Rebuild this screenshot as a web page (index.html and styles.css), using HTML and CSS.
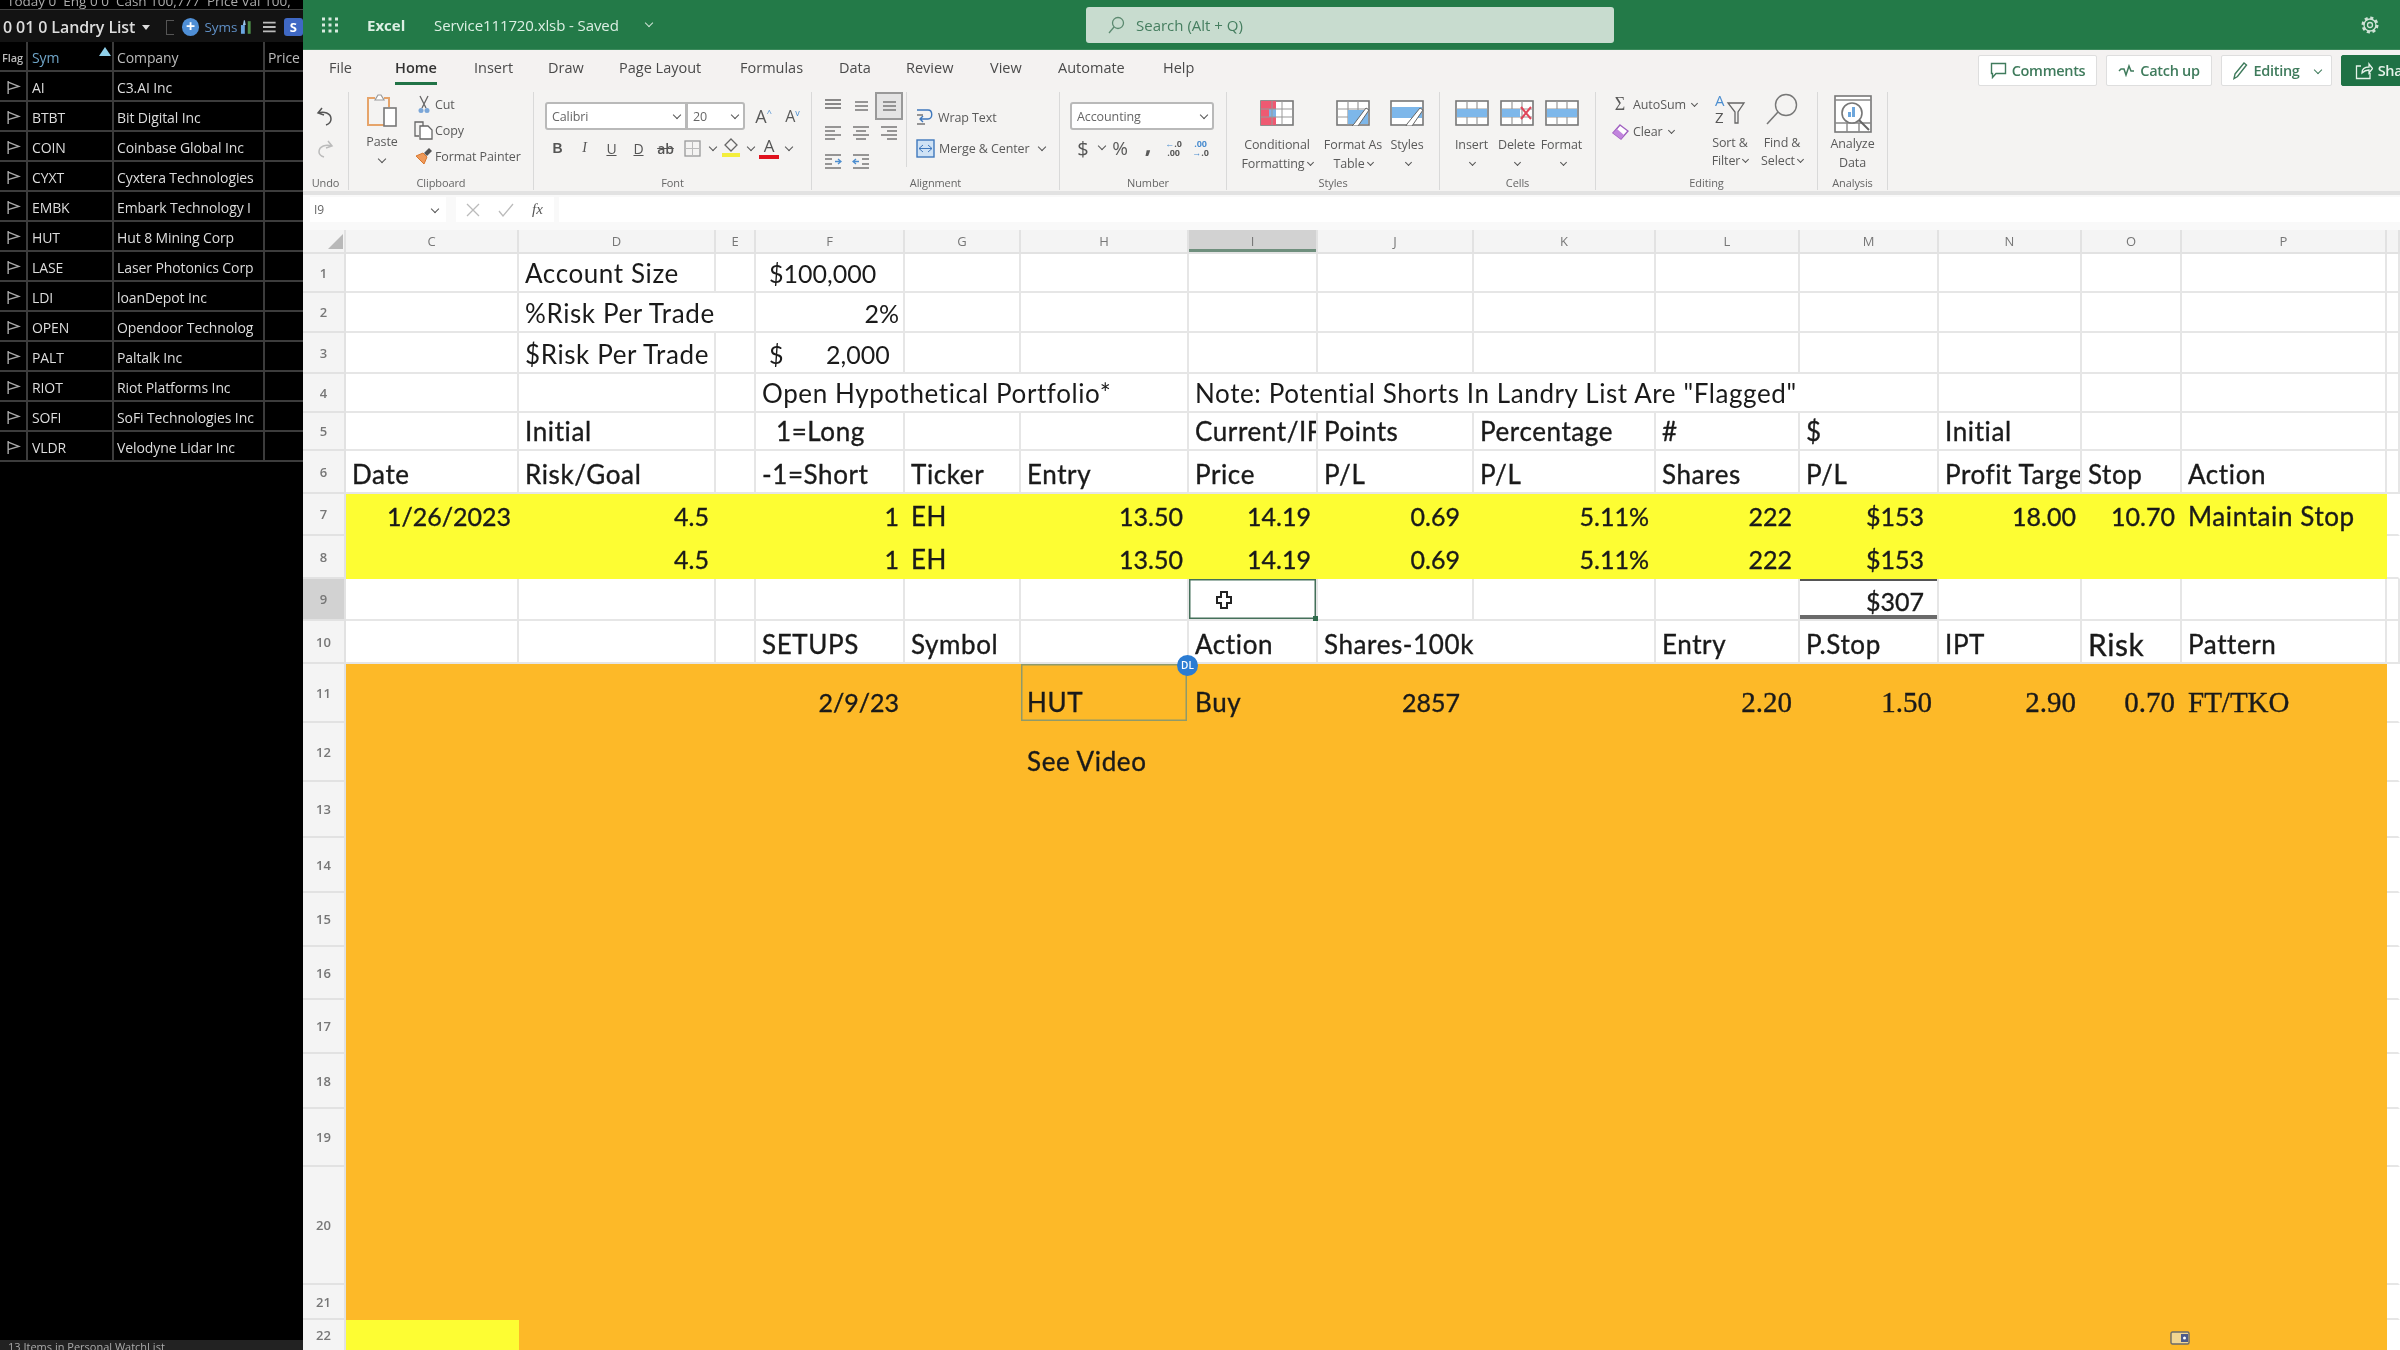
FILE: index.html
```html
<!DOCTYPE html>
<html lang="en">
<head>
<meta charset="utf-8">
<title>Excel - Service111720.xlsb</title>
<link rel="stylesheet" href="styles.css">
</head>
<body>
<svg class="sprite" width="0" height="0">
  <symbol id="flag" viewBox="0 0 14 14"><path d="M2 1v12M2 2l10 4-10 3" fill="none" stroke="#aaa" stroke-width="1.3"/></symbol>
  <symbol id="al-top" viewBox="0 0 18 18"><path d="M1 3h16M1 7h16M1 11h16" stroke="#666" stroke-width="1.6"/></symbol>
  <symbol id="al-mid" viewBox="0 0 18 18"><path d="M3 5h13M3 9h13M3 13h13" stroke="#777" stroke-width="1.6"/></symbol>
  <symbol id="al-left" viewBox="0 0 18 18"><path d="M1 2h16M1 6h10M1 10h16M1 14h10" stroke="#777" stroke-width="1.6"/></symbol>
  <symbol id="al-center" viewBox="0 0 18 18"><path d="M1 2h16M4 6h10M1 10h16M4 14h10" stroke="#777" stroke-width="1.6"/></symbol>
  <symbol id="al-right" viewBox="0 0 18 18"><path d="M1 2h16M7 6h10M1 10h16M7 14h10" stroke="#777" stroke-width="1.6"/></symbol>
  <symbol id="grid" viewBox="0 0 34 26"><rect x="1" y="1" width="32" height="24" fill="#fff" stroke="#777" stroke-width="1.6"/><path d="M12 1v24M22 1v24M1 9h32M1 17h32" stroke="#999" stroke-width="1.2"/></symbol>
</svg>

<div class="app">
  <aside class="watch">
    <div class="watch-stats">Today 0 &nbsp;Eng 0 0 &nbsp;Cash 100,777 &nbsp;Price Val 100,</div>
    <div class="watch-bar">
      <span class="watch-title">0 01 0 Landry List</span>
      <span class="watch-caret"></span>
      <span class="watch-box"></span>
      <span class="watch-plus">+</span>
      <span class="watch-syms">Syms</span>
      <svg class="watch-bars" width="15" height="16" viewBox="0 0 15 16"><path d="M2 15V6h4v9z" fill="#6aa6e0"/><path d="M4 6l1-5h1l1 5z" fill="#9cc7ea"/><path d="M9 15V2h3v13z" fill="#4e8f4a"/></svg>
      <svg class="watch-menu" width="13" height="12" viewBox="0 0 13 12"><path d="M0 1.5h13M0 6h13M0 10.500h13" stroke="#bbb" stroke-width="2"/></svg>
      <span class="watch-s">S</span>
    </div>
    <div class="watch-table">
      <div class="wrow whead"><span class="wflag">Flag</span><span class="wsym wsorted">Sym</span><span class="wco">Company</span><span class="wpr">Price</span></div>
      <div class="wrow"><span class="wflag"><svg class="fi"><use href="#flag"/></svg></span><span class="wsym">AI</span><span class="wco">C3.AI Inc</span><span class="wpr"></span></div>
      <div class="wrow"><span class="wflag"><svg class="fi"><use href="#flag"/></svg></span><span class="wsym">BTBT</span><span class="wco">Bit Digital Inc</span><span class="wpr"></span></div>
      <div class="wrow"><span class="wflag"><svg class="fi"><use href="#flag"/></svg></span><span class="wsym">COIN</span><span class="wco">Coinbase Global Inc</span><span class="wpr"></span></div>
      <div class="wrow"><span class="wflag"><svg class="fi"><use href="#flag"/></svg></span><span class="wsym">CYXT</span><span class="wco">Cyxtera Technologies</span><span class="wpr"></span></div>
      <div class="wrow"><span class="wflag"><svg class="fi"><use href="#flag"/></svg></span><span class="wsym">EMBK</span><span class="wco">Embark Technology I</span><span class="wpr"></span></div>
      <div class="wrow"><span class="wflag"><svg class="fi"><use href="#flag"/></svg></span><span class="wsym">HUT</span><span class="wco">Hut 8 Mining Corp</span><span class="wpr"></span></div>
      <div class="wrow"><span class="wflag"><svg class="fi"><use href="#flag"/></svg></span><span class="wsym">LASE</span><span class="wco">Laser Photonics Corp</span><span class="wpr"></span></div>
      <div class="wrow"><span class="wflag"><svg class="fi"><use href="#flag"/></svg></span><span class="wsym">LDI</span><span class="wco">loanDepot Inc</span><span class="wpr"></span></div>
      <div class="wrow"><span class="wflag"><svg class="fi"><use href="#flag"/></svg></span><span class="wsym">OPEN</span><span class="wco">Opendoor Technolog</span><span class="wpr"></span></div>
      <div class="wrow"><span class="wflag"><svg class="fi"><use href="#flag"/></svg></span><span class="wsym">PALT</span><span class="wco">Paltalk Inc</span><span class="wpr"></span></div>
      <div class="wrow"><span class="wflag"><svg class="fi"><use href="#flag"/></svg></span><span class="wsym">RIOT</span><span class="wco">Riot Platforms Inc</span><span class="wpr"></span></div>
      <div class="wrow"><span class="wflag"><svg class="fi"><use href="#flag"/></svg></span><span class="wsym">SOFI</span><span class="wco">SoFi Technologies Inc</span><span class="wpr"></span></div>
      <div class="wrow"><span class="wflag"><svg class="fi"><use href="#flag"/></svg></span><span class="wsym">VLDR</span><span class="wco">Velodyne Lidar Inc</span><span class="wpr"></span></div>
    </div>
    <div class="watch-status">13 Items in Personal WatchList</div>
  </aside>

  <main class="excel">
    <header class="titlebar">
      <svg class="waffle" width="18" height="16" viewBox="0 0 18 16"><path d="M1 2h3M7.500 2h3M14 2h3M1 8h3M7.500 8h3M14 8h3M1 14h3M7.500 14h3M14 14h3" stroke="#d8eadf" stroke-width="3"/></svg>
      <span class="app-name">Excel</span>
      <span class="file-name">Service111720.xlsb - Saved</span>
      <span class="chev chev-light"></span>
      <div class="search">
        <svg width="18" height="18" viewBox="0 0 18 18"><circle cx="11" cy="7" r="5.500" fill="none" stroke="#5c8a70" stroke-width="1.3"/><path d="M7 11l-5 6" stroke="#5c8a70" stroke-width="1.300"/></svg>
        <span>Search (Alt + Q)</span>
      </div>
      <svg class="gear" width="20" height="20" viewBox="0 0 20 20"><circle cx="10" cy="10" r="7" fill="none" stroke="#cfe3d6" stroke-width="3" stroke-dasharray="3 2.500"/><circle cx="10" cy="10" r="6" fill="none" stroke="#cfe3d6" stroke-width="1.300"/><circle cx="10" cy="10" r="2.500" fill="none" stroke="#cfe3d6" stroke-width="1.300"/></svg>
    </header>

    <div class="tabbar">
      <nav class="tabs">
        <span>File</span><span class="tab-on">Home</span><span>Insert</span><span>Draw</span><span>Page Layout</span><span>Formulas</span><span>Data</span><span>Review</span><span>View</span><span>Automate</span><span>Help</span>
      </nav>
      <div class="actions">
        <button class="act act-comments"><svg width="17" height="17" viewBox="0 0 17 17"><path d="M1.500 1.500h14v10H6l-3.500 4v-4h-1z" fill="none" stroke="#3f7b5c" stroke-width="1.400"/></svg>Comments</button>
        <button class="act act-catch"><svg width="17" height="13" viewBox="0 0 17 13"><path d="M1 7l2-2 3 0 2 6 3-9 2 5h3" fill="none" stroke="#3f7b5c" stroke-width="1.500"/></svg>Catch up</button>
        <button class="act act-edit"><svg width="16" height="19" viewBox="0 0 16 19"><path d="M3 13L12 2l2.500 2L5.500 15.500 2 17.500z" fill="none" stroke="#3f7b5c" stroke-width="1.400"/></svg>Editing<span class="chev chev-green"></span></button>
        <button class="act act-share"><svg width="18" height="18" viewBox="0 0 18 18"><path d="M6 4H1.500v12.500H15V11M7 11c0-4 3-6 7-6V2l3.500 4.500L14 11V8c-3 0-5 1-7 3z" fill="none" stroke="#e6f2ea" stroke-width="1.300"/></svg>Share</button>
      </div>
    </div>

    <section class="ribbon">
      <div class="group g-undo">
        <div class="gbody undo-body">
          <svg width="18" height="19" viewBox="0 0 18 19"><path d="M6 1L2 6l6 2M2 6c6-2 13 0 13 6 0 3-2 5-5 6" fill="none" stroke="#555" stroke-width="1.500"/></svg>
          <svg width="18" height="18" viewBox="0 0 18 18"><path d="M12 1l4 5-6 2M16 6C10 4 3 6 3 12c0 3 2 4 5 5" fill="none" stroke="#bbb" stroke-width="1.500"/></svg>
        </div>
        <div class="glabel">Undo</div>
      </div>

      <div class="group g-clip">
        <div class="gbody">
          <div class="paste">
            <svg width="32" height="34" viewBox="0 0 32 34"><path d="M9 4H2v27h16" fill="none" stroke="#e6a46a" stroke-width="2"/><path d="M9 6l3-5h3l3 5z" fill="#fff" stroke="#999" stroke-width="1.200"/><path d="M18 4h5v9" fill="none" stroke="#e6a46a" stroke-width="2"/><rect x="18" y="14" width="12" height="18" fill="#fff" stroke="#777" stroke-width="1.600"/></svg>
            <span class="paste-t">Paste</span>
            <span class="chev"></span>
          </div>
          <div class="cliplist">
            <div class="clipi"><span class="clipic"><svg width="14" height="19" viewBox="0 0 14 19"><path d="M3 1l6 12M11 1L5 13" stroke="#666" stroke-width="1.300"/><circle cx="4" cy="15.500" r="2.500" fill="#7aa6d8"/><circle cx="10" cy="15.500" r="2.500" fill="#7aa6d8"/></svg></span>Cut</div>
            <div class="clipi"><span class="clipic"><svg width="20" height="19" viewBox="0 0 20 19"><path d="M5 15H1V1h8v4" fill="none" stroke="#666" stroke-width="1.300"/><path d="M6 5h8l4 4v9H6z" fill="#fff" stroke="#666" stroke-width="1.300"/></svg></span>Copy</div>
            <div class="clipi"><span class="clipic"><svg width="18" height="18" viewBox="0 0 18 18"><path d="M1 9l7-3 4 4-3 7z" fill="#ef9a5a" stroke="#d9772e"/><path d="M9 6l5-5 3 3-5 5z" fill="#555"/></svg></span>Format Painter</div>
          </div>
        </div>
        <div class="glabel">Clipboard</div>
      </div>

      <div class="group g-font">
        <div class="gbody gcol">
          <div class="font-row">
            <div class="select sel-font">Calibri<span class="chev"></span></div>
            <div class="select sel-size">20<span class="chev"></span></div>
            <span class="grow">A<sup>^</sup></span>
            <span class="grow shrink">A<sup>v</sup></span>
          </div>
          <div class="font-tools">
            <span class="ft ft-b">B</span>
            <span class="ft ft-i">I</span>
            <span class="ft ft-u">U</span>
            <span class="ft ft-d">D</span>
            <span class="ft ft-s">ab</span>
            <span class="ft"><svg width="17" height="17" viewBox="0 0 17 17"><rect x="1" y="1" width="15" height="15" fill="none" stroke="#999" stroke-width="1.300"/><path d="M8.500 1v15M1 8.500h15" stroke="#bbb"/></svg></span>
            <span class="fc"><span class="chev"></span></span>
            <span class="ft"><svg width="18" height="20" viewBox="0 0 18 20"><path d="M9 1l6 6-6 6-6-6z" fill="none" stroke="#666" stroke-width="1.300"/><rect x="0" y="15" width="18" height="4" fill="#f3ee3c"/></svg></span>
            <span class="fc"><span class="chev"></span></span>
            <span class="ft ft-a">A</span>
            <span class="fc"><span class="chev"></span></span>
          </div>
        </div>
        <div class="glabel">Font</div>
      </div>

      <div class="group g-align">
        <div class="gbody">
          <div class="align-grid">
            <svg class="ai"><use href="#al-top"/></svg>
            <svg class="ai"><use href="#al-mid"/></svg>
            <span class="ai-on"><svg class="ai"><use href="#al-mid"/></svg></span>
            <svg class="ai"><use href="#al-left"/></svg>
            <svg class="ai"><use href="#al-center"/></svg>
            <svg class="ai"><use href="#al-right"/></svg>
            <svg class="ai" viewBox="0 0 18 18"><path d="M1 2h16M1 15h16M1 6h7M1 11h7" stroke="#777" stroke-width="1.600"/><path d="M11 8.500h6M14 6l3 2.500-3 2.500" fill="none" stroke="#4c8ed0" stroke-width="1.300"/></svg>
            <svg class="ai" viewBox="0 0 18 18"><path d="M1 2h16M1 15h16M10 6h7M10 11h7" stroke="#777" stroke-width="1.600"/><path d="M1 8.500h6M4 6L1 8.500 4 11" fill="none" stroke="#4c8ed0" stroke-width="1.300"/></svg>
          </div>
          <div class="align-text">
            <div class="ati"><svg width="18" height="20" viewBox="0 0 18 20"><path d="M1 3h11M12 3c5 0 5 9 0 9H5M7 9l-3 3 3 3" fill="none" stroke="#3f78bd" stroke-width="1.400"/><path d="M1 8h6M1 17h8" stroke="#777" stroke-width="1.400"/></svg>Wrap Text</div>
            <div class="ati"><svg width="19" height="19" viewBox="0 0 19 19"><rect x="1" y="1" width="17" height="17" fill="#cfe2f5" stroke="#3f78bd" stroke-width="1.400"/><path d="M3 9.500h13M7 6l-4 3.500L7 13M12 6l4 3.500-4 3.500" fill="none" stroke="#3f78bd"/></svg>Merge &amp; Center<span class="chev"></span></div>
          </div>
        </div>
        <div class="glabel">Alignment</div>
      </div>

      <div class="group g-num">
        <div class="gbody gcol">
          <div class="select sel-num">Accounting<span class="chev"></span></div>
          <div class="num-tools">
            <span class="nt nt-big">$</span><span class="chev"></span><span class="nt nt-pct">%</span><span class="nt nt-comma">,</span>
            <span class="nt nt-dec"><b>←</b>.0<br>.00</span><span class="nt nt-dec"><i>.00</i><br><b>→</b>.0</span>
          </div>
        </div>
        <div class="glabel">Number</div>
      </div>

      <div class="group g-styles">
        <div class="gbody">
          <div class="bigb b-cf">
            <svg width="34" height="26" viewBox="0 0 34 26"><rect x="1" y="1" width="32" height="24" fill="#fff" stroke="#777" stroke-width="1.600"/><path d="M1 1h15v8H1zM1 17h15v8H1z" fill="#ee5a72"/><path d="M1 9h8v8H1z" fill="#ee5a72"/><path d="M9 9h7v8H9z" fill="#7fb2e5"/><path d="M12 1v24M22 1v24M1 9h32M1 17h32" stroke="#999"/></svg>
            <span class="bt">Conditional<br>Formatting<span class="chev"></span></span>
          </div>
          <div class="bigb b-fat">
            <svg width="34" height="26" viewBox="0 0 34 26"><use href="#grid"/><path d="M12 10h20v14H12z" fill="#7db7ea"/><path d="M18 24L30 8l3 2-11 16-6 0z" fill="#fff" stroke="#666"/></svg>
            <span class="bt">Format As<br>Table<span class="chev"></span></span>
          </div>
          <div class="bigb b-st">
            <svg width="34" height="26" viewBox="0 0 34 26"><rect x="1" y="1" width="32" height="24" fill="#fff" stroke="#777" stroke-width="1.600"/><path d="M2 7h30v11H2z" fill="#7db7ea"/><path d="M17 24L30 8l3 2-11 16-6 0z" fill="#fff" stroke="#666"/></svg>
            <span class="bt">Styles<br><span class="chev"></span></span>
          </div>
        </div>
        <div class="glabel">Styles</div>
      </div>

      <div class="group g-cells">
        <div class="gbody">
          <div class="bigb b-cell">
            <svg width="34" height="26" viewBox="0 0 34 26"><use href="#grid"/><path d="M2 9h30v8H2z" fill="#7db7ea"/></svg>
            <span class="bt">Insert<br><span class="chev"></span></span>
          </div>
          <div class="bigb b-cell">
            <svg width="34" height="26" viewBox="0 0 34 26"><use href="#grid"/><path d="M2 9h18v8H2z" fill="#7db7ea"/><path d="M21 7l10 12M31 7L21 19" stroke="#e0475b" stroke-width="2"/></svg>
            <span class="bt">Delete<br><span class="chev"></span></span>
          </div>
          <div class="bigb b-cell">
            <svg width="34" height="26" viewBox="0 0 34 26"><use href="#grid"/><path d="M2 9h30v8H2z" fill="#7db7ea"/></svg>
            <span class="bt">Format<br><span class="chev"></span></span>
          </div>
        </div>
        <div class="glabel">Cells</div>
      </div>

      <div class="group g-edit">
        <div class="gbody">
          <div class="editlist">
            <div class="edi"><span class="sigma">Σ</span>AutoSum<span class="chev"></span></div>
            <div class="edi"><svg width="18" height="16" viewBox="0 0 18 16"><path d="M9 1l8 6-7 8-8-6z" fill="#fff" stroke="#a05fc0" stroke-width="1.400"/><path d="M2 9l4-4 7 6-3 4z" fill="#c184dd"/></svg>Clear<span class="chev"></span></div>
          </div>
          <div class="bigb b-sort">
            <svg width="32" height="32" viewBox="0 0 32 32"><text class="az az-a" x="1" y="13">A</text><text class="az" x="1" y="30">Z</text><path d="M14 10h16l-6 9v11h-3V19z" fill="none" stroke="#666" stroke-width="1.300"/></svg>
            <span class="bt">Sort &amp;<br>Filter<span class="chev"></span></span>
          </div>
          <div class="bigb b-sort">
            <svg width="34" height="32" viewBox="0 0 34 32"><circle cx="21" cy="12" r="10.500" fill="none" stroke="#777" stroke-width="1.400"/><path d="M13 19L2 31" stroke="#777" stroke-width="1.600"/></svg>
            <span class="bt">Find &amp;<br>Select<span class="chev"></span></span>
          </div>
        </div>
        <div class="glabel">Editing</div>
      </div>

      <div class="group g-ana">
        <div class="gbody gcol gcenter">
          <svg width="38" height="38" viewBox="0 0 38 38"><rect x="1" y="1" width="36" height="36" fill="#fff" stroke="#777" stroke-width="1.600"/><path d="M1 5h36M13 28v9M25 28v9M1 28h36" stroke="#888" stroke-width="1.400"/><circle cx="18" cy="18" r="10" fill="#fff" stroke="#777" stroke-width="1.600"/><path d="M14 22v-5h3v5zM18 22V12h3v10z" fill="#6da6dc"/><path d="M25 25l10 10" stroke="#666" stroke-width="2"/></svg>
          <span class="bt">Analyze<br>Data</span>
        </div>
        <div class="glabel">Analysis</div>
      </div>
    </section>

    <div class="formula">
      <div class="namebox">I9<span class="chev"></span></div>
      <div class="fxbox">
        <svg width="14" height="14" viewBox="0 0 14 14"><path d="M1 1l12 12M13 1L1 13" stroke="#bbb" stroke-width="1.300"/></svg>
        <svg width="16" height="14" viewBox="0 0 16 14"><path d="M1 8l4 5L15 1" fill="none" stroke="#bbb" stroke-width="1.300"/></svg>
        <span class="fx">fx</span>
      </div>
      <div class="fxinput"></div>
    </div>

    <div class="sheet">
      <table class="grid">
        <colgroup>
          <col class="c-rh"><col class="c-c"><col class="c-d"><col class="c-e"><col class="c-f"><col class="c-g"><col class="c-h"><col class="c-i"><col class="c-j"><col class="c-k"><col class="c-l"><col class="c-m"><col class="c-n"><col class="c-o"><col class="c-p"><col class="c-q">
        </colgroup>
        <tbody>
          <tr class="hh"><th class="corner"><svg width="16" height="15" viewBox="0 0 16 15"><path d="M15 0v15H0z" fill="#b9b9b9"/></svg></th><th>C</th><th>D</th><th>E</th><th>F</th><th>G</th><th>H</th><th class="col-on">I</th><th>J</th><th>K</th><th>L</th><th>M</th><th>N</th><th>O</th><th>P</th><th></th></tr>
          <tr class="h39"><th>1</th><td></td><td class="lite">Account Size</td><td></td><td class="lite figs pad13">$100,000</td><td></td><td></td><td></td><td></td><td></td><td></td><td></td><td></td><td></td><td></td><td></td></tr>
          <tr class="h40"><th>2</th><td></td><td class="lite" colspan="2">%Risk Per Trade</td><td class="lite num r4">2%</td><td></td><td></td><td></td><td></td><td></td><td></td><td></td><td></td><td></td><td></td><td></td></tr>
          <tr class="h41"><th>3</th><td></td><td class="lite">$Risk Per Trade</td><td></td><td class="lite figs acct"><span>$</span><span>2,000</span></td><td></td><td></td><td></td><td></td><td></td><td></td><td></td><td></td><td></td><td></td><td></td></tr>
          <tr class="h39"><th>4</th><td></td><td></td><td></td><td class="lite" colspan="3">Open Hypothetical Portfolio*</td><td class="lite" colspan="5">Note: Potential Shorts In Landry List Are "Flagged"</td><td></td><td></td><td></td><td></td></tr>
          <tr class="h38"><th>5</th><td></td><td>Initial</td><td></td><td class="pad20">1=Long</td><td></td><td></td><td>Current/IF</td><td>Points</td><td>Percentage</td><td>#</td><td>$</td><td>Initial</td><td></td><td></td><td></td></tr>
          <tr class="h43"><th>6</th><td>Date</td><td>Risk/Goal</td><td></td><td>-1=Short</td><td>Ticker</td><td>Entry</td><td>Price</td><td>P/L</td><td>P/L</td><td>Shares</td><td>P/L</td><td>Profit Target</td><td>Stop</td><td>Action</td><td></td></tr>
          <tr class="h42 fy"><th>7</th><td class="num r6">1/26/2023</td><td class="num">4.5</td><td></td><td class="num r4">1</td><td>EH</td><td class="num r4">13.50</td><td class="num r5">14.19</td><td class="num r12">0.69</td><td class="num">5.11%</td><td class="num r6">222</td><td class="num r13">$153</td><td class="num r4">18.00</td><td class="num r5">10.70</td><td>Maintain Stop</td><td class="white"></td></tr>
          <tr class="h43 fy"><th>8</th><td></td><td class="num">4.5</td><td></td><td class="num r4">1</td><td>EH</td><td class="num r4">13.50</td><td class="num r5">14.19</td><td class="num r12">0.69</td><td class="num">5.11%</td><td class="num r6">222</td><td class="num r13">$153</td><td></td><td></td><td></td><td class="white"></td></tr>
          <tr class="h42"><th class="row-on">9</th><td></td><td></td><td></td><td></td><td></td><td></td><td class="active"><svg class="cursor" width="18" height="20" viewBox="0 0 18 20"><path d="M6 2h6v5h4v6h-4v5H6v-5H2V7h4z" fill="#fff" stroke="#222" stroke-width="2"/></svg><i class="handle"></i></td><td></td><td></td><td></td><td class="num r13 total">$307</td><td></td><td></td><td></td><td></td></tr>
          <tr class="h43"><th>10</th><td></td><td></td><td></td><td>SETUPS</td><td>Symbol</td><td></td><td>Action</td><td colspan="2">Shares-100k</td><td>Entry</td><td>P.Stop</td><td>IPT</td><td class="big">Risk</td><td>Pattern</td><td></td></tr>
          <tr class="h59 fo"><th>11</th><td></td><td></td><td></td><td class="num r4">2/9/23</td><td></td><td class="peer">HUT<span class="badge">DL</span></td><td>Buy</td><td class="num r12">2857</td><td></td><td class="num serif r6">2.20</td><td class="num serif r5">1.50</td><td class="num serif r4">2.90</td><td class="num serif r5">0.70</td><td class="serif">FT/TKO</td><td class="white"></td></tr>
          <tr class="h59 fo"><th>12</th><td></td><td></td><td></td><td></td><td></td><td>See Video</td><td></td><td></td><td></td><td></td><td></td><td></td><td></td><td></td><td class="white"></td></tr>
          <tr class="h56 fo"><th>13</th><td></td><td></td><td></td><td></td><td></td><td></td><td></td><td></td><td></td><td></td><td></td><td></td><td></td><td></td><td class="white"></td></tr>
          <tr class="h55 fo"><th>14</th><td></td><td></td><td></td><td></td><td></td><td></td><td></td><td></td><td></td><td></td><td></td><td></td><td></td><td></td><td class="white"></td></tr>
          <tr class="h54 fo"><th>15</th><td></td><td></td><td></td><td></td><td></td><td></td><td></td><td></td><td></td><td></td><td></td><td></td><td></td><td></td><td class="white"></td></tr>
          <tr class="h53 fo"><th>16</th><td></td><td></td><td></td><td></td><td></td><td></td><td></td><td></td><td></td><td></td><td></td><td></td><td></td><td></td><td class="white"></td></tr>
          <tr class="h54 fo"><th>17</th><td></td><td></td><td></td><td></td><td></td><td></td><td></td><td></td><td></td><td></td><td></td><td></td><td></td><td></td><td class="white"></td></tr>
          <tr class="h55 fo"><th>18</th><td></td><td></td><td></td><td></td><td></td><td></td><td></td><td></td><td></td><td></td><td></td><td></td><td></td><td></td><td class="white"></td></tr>
          <tr class="h58 fo"><th>19</th><td></td><td></td><td></td><td></td><td></td><td></td><td></td><td></td><td></td><td></td><td></td><td></td><td></td><td></td><td class="white"></td></tr>
          <tr class="h118 fo"><th>20</th><td></td><td></td><td></td><td></td><td></td><td></td><td></td><td></td><td></td><td></td><td></td><td></td><td></td><td></td><td class="white"></td></tr>
          <tr class="h35 fo"><th>21</th><td></td><td></td><td></td><td></td><td></td><td></td><td></td><td></td><td></td><td></td><td></td><td></td><td></td><td></td><td class="white"></td></tr>
          <tr class="h32 fo"><th>22</th><td class="fy-cell"></td><td></td><td></td><td></td><td></td><td></td><td></td><td></td><td></td><td></td><td></td><td></td><td></td><td></td><td class="white"></td></tr>
        </tbody>
      </table>
      <svg class="sheet-tag" width="20" height="14" viewBox="0 0 20 14"><rect x="1" y="1" width="18" height="12" rx="1.500" fill="#f2d591" stroke="#6b6b6b" stroke-width="1.400"/><rect x="11" y="3" width="7" height="8" fill="#4c5a8a"/><circle cx="14.500" cy="7" r="1.500" fill="#fff"/></svg>
    </div>
  </main>
</div>
</body>
</html>
```

FILE: styles.css
```css
* { box-sizing: border-box; }
html, body { margin: 0; height: 100%; overflow: hidden; background: #000; }
.sprite { position: absolute; }
.app {
  display: flex; width: 2400px; height: 1350px; overflow: hidden;
  font-family: "Open Sans", "Noto Sans", sans-serif;
  filter: blur(0.45px);
}

/* Watchlist */
.watch { width: 303px; flex: none; display: flex; flex-direction: column; background: #000; color: #ddd; overflow: hidden; }
.watch-stats { height: 10px; font-size: 13.5px; line-height: 3px; color: #aaa; white-space: nowrap; overflow: hidden; border-bottom: 1px solid #444; padding-left: 7px; }
.watch-bar { height: 32px; display: flex; align-items: center; padding: 2px 0 0 3px; background: #131313; white-space: nowrap; }
.watch-title { font-size: 16px; font-weight: 600; color: #ddd; width: 137px; letter-spacing: -0.1px; }
.watch-caret { width: 0; height: 0; border: 4px solid transparent; border-top: 5px solid #ddd; margin: 4px 0 0 6px; }
.watch-box { width: 8px; height: 15px; border: 1px solid #555; border-right: 0; margin-left: 16px; }
.watch-plus { width: 18px; height: 18px; border-radius: 50%; background: #4f8fd6; color: #fff; font-size: 16px; font-weight: 700; line-height: 17px; text-align: center; margin-left: 8px; }
.watch-syms { font-size: 13.5px; color: #5f8fc5; margin-left: 5px; width: 36px; }
.watch-menu { margin-left: 9px; }
.watch-s { width: 20px; height: 18px; background: #3f68c4; color: #fff; font-size: 13px; font-weight: 700; line-height: 18px; text-align: center; border-radius: 3px; margin-left: 8px; }
.watch-table { display: flex; flex-direction: column; }
.wrow { display: grid; grid-template-columns: 28px 86px 151px 38px; height: 30px; border-bottom: 2px solid #3c3c3c; font-size: 14px; letter-spacing: -0.1px; align-items: stretch; white-space: nowrap; }
.wrow span { display: flex; align-items: center; border-right: 2px solid #3c3c3c; overflow: hidden; padding-top: 2px; }
.wrow .wpr { border-right: 0; padding-left: 3px; }
.wflag { padding-left: 6px; }
.wsym { padding-left: 4px; }
.wco { padding-left: 3px; }
.fi { width: 15px; height: 15px; }
.whead { height: 30px; background: #000; color: #bbb; }
.whead .wflag { padding-left: 2px; font-size: 11px; font-weight: 600; }
.whead .wsorted { color: #6fa5c8; position: relative; }
.wsorted::after { content: ""; position: absolute; right: 1px; top: 5px; border: 6px solid transparent; border-bottom: 9px solid #8fd0ea; border-top: 0; }
.watch-status { margin-top: auto; height: 10px; background: #222; color: #aaa; font-size: 11px; line-height: 14px; padding-left: 8px; }

/* Excel shell */
.excel { flex: 1; min-width: 0; display: flex; flex-direction: column; background: #fff; overflow: hidden; }
.titlebar { height: 50px; flex: none; display: flex; align-items: center; background: #237a48; color: #dcefe3; border-bottom: 1px solid #3c8a5c; padding-left: 18px; position: relative; }
.app-name { font-size: 15px; font-weight: 700; margin-left: 28px; width: 67px; }
.file-name { font-size: 15px; letter-spacing: -0.1px; width: 212px; white-space: nowrap; }
.chev { display: inline-block; width: 6px; height: 6px; border-right: 1.4px solid #555; border-bottom: 1.4px solid #555; transform: rotate(45deg); margin: -2px 0 0 5px; flex: none; }
.chev-light { border-color: #cfe3d6; margin: -3px 0 0 0; }
.chev-green { border-color: #3f7b5c; margin-left: 10px; }
.search { display: flex; align-items: center; gap: 11px; width: 528px; height: 36px; margin-left: 434px; padding-left: 21px; background: #c8dccf; border-radius: 3px; color: #467e60; font-size: 15px; }
.gear { margin-left: 746px; }

.tabbar { height: 40px; flex: none; display: flex; justify-content: space-between; background: #f4f2f1; padding-left: 26px; overflow: hidden; }
.tabs { display: grid; grid-template-columns: 66px 79px 74px 71px 121px 99px 67px 84px 68px 105px auto; font-size: 14.5px; color: #4a4a4a; align-items: center; padding-bottom: 5px; white-space: nowrap; }
.tab-on { font-weight: 600; position: relative; color: #333; justify-self: start; }
.tab-on::after { content: ""; position: absolute; left: 0; right: 0; bottom: -8px; height: 3px; background: #217346; }
.actions { display: flex; gap: 9px; padding-top: 5px; margin-right: -30px; }
.act { height: 31px; display: flex; align-items: center; justify-content: center; gap: 5px; background: #fff; border: 1px solid #dedede; border-radius: 2px; color: #3f7b5c; font: 600 14.5px "Open Sans", sans-serif; letter-spacing: -0.3px; padding: 0; white-space: nowrap; }
.act-comments { width: 119px; }
.act-catch { width: 106px; }
.act-edit { width: 111px; }
.act-share { width: 89px; background: #1f7145; border-color: #1f7145; color: #e6f2ea; }

.ribbon { height: 105px; flex: none; display: flex; background: #f4f3f2; border-bottom: 4px solid #e2e2e2; font-size: 12.5px; color: #5a5a5a; white-space: nowrap; letter-spacing: -0.1px; }
.group { display: flex; flex-direction: column; height: 98px; border-right: 1px solid #d9d9d9; flex: none; margin-top: 2px; }
.gbody { height: 83px; display: flex; }
.gcol { flex-direction: column; }
.gcenter { align-items: center; padding-top: 3px; }
.glabel { flex: 1; text-align: center; font-size: 11px; color: #666; line-height: 15px; }
.g-undo { width: 46px; }
.undo-body { flex-direction: column; align-items: center; gap: 14px; padding: 15px 2px 0 0; }
.g-clip { width: 185px; }
.paste { width: 40px; margin-left: 13px; padding-top: 2px; display: flex; flex-direction: column; align-items: center; }
.paste-t { margin-top: 5px; }
.paste .chev { margin: 6px 0 0; }
.cliplist { margin: -1px 0 0 10px; }
.clipi { height: 26px; display: flex; align-items: center; }
.clipic { width: 23px; display: flex; justify-content: center; }
.g-font { width: 278px; }
.font-row { display: flex; align-items: center; padding: 10px 0 0 11px; }
.select { display: flex; align-items: center; justify-content: space-between; height: 28px; background: #fff; border: 2px solid #b9b9b9; padding: 0 5px; font-size: 12.5px; color: #666; }
.sel-font { width: 142px; border-radius: 3px 0 0 3px; }
.sel-size { width: 58px; border-left: 1px solid #b9b9b9; border-radius: 0 3px 3px 0; }
.grow { font-size: 18px; width: 29px; text-align: center; margin-left: 4px; line-height: 20px; }
.grow.shrink { font-size: 16px; margin-left: 0; }
.grow sup { font-size: 9px; color: #4c8ed0; line-height: 0; }
.font-tools { display: flex; align-items: center; height: 28px; margin: 4px 0 0 10px; font-size: 14px; color: #555; }
.ft { width: 27px; display: flex; justify-content: center; }
.fc { width: 9px; display: flex; justify-content: center; margin-right: 2px; }
.fc:last-child { margin-right: 0; }
.ft-b { font-weight: 700; font-family: "Liberation Sans", sans-serif; }
.ft-i { font-style: italic; font-family: "Liberation Serif", serif; }
.ft-u { text-decoration: underline; }
.ft-d { text-decoration: underline; }
.ft-s { text-decoration: line-through; font-weight: 600; }
.ft-a { font-size: 17px; line-height: 18px; box-shadow: inset 0 -4px 0 #e0111d; width: 20px; margin: 0 3px 0 4px; height: 22px; }
.g-align { width: 248px; }
.align-grid { display: grid; grid-template-columns: 28px 28px 28px; grid-auto-rows: 28px; padding-left: 7px; justify-items: center; align-items: center; }
.ai { width: 18px; height: 18px; }
.ai-on { width: 28px; height: 28px; display: flex; align-items: center; justify-content: center; border: 2px solid #999; background: #e4e4e4; }
.align-text { border-left: 1px solid #d9d9d9; margin: 0 0 8px 3px; padding: 11px 0 0 9px; }
.ati { height: 28px; margin-bottom: 3px; display: flex; align-items: center; gap: 4px; }
.g-num { width: 167px; padding: 10px 0 0 10px; height: 98px; }
.g-num .gbody { height: 73px; }
.sel-num { width: 144px; border-radius: 3px; }
.num-tools { display: flex; align-items: center; height: 28px; margin-top: 4px; }
.nt { display: block; text-align: center; }
.nt-big { font-size: 20px; width: 26px; color: #555; }
.num-tools > .chev { margin: -4px 0 0 3px; }
.nt-pct { font-size: 19px; width: 24px; margin-left: 3px; }
.nt-comma { font-size: 24px; font-weight: 700; width: 24px; line-height: 14px; margin: -8px 0 0 4px; }
.nt-dec { font-size: 9px; line-height: 9px; width: 27px; font-weight: 700; }
.nt-dec b, .nt-dec i { color: #4c8ed0; font-style: normal; }
.g-styles { width: 213px; }
.g-styles .gbody { padding-left: 12px; }
.bigb { display: flex; flex-direction: column; align-items: center; padding-top: 8px; }
.bt { display: block; text-align: center; line-height: 19px; margin-top: 9px; }
.b-cf { width: 76px; margin-right: 4px; }
.b-fat { width: 68px; }
.b-st { width: 40px; }
.bt > .chev { width: 5px; height: 5px; margin: -2px 0 2px 3px; vertical-align: middle; }
.g-cells { width: 156px; }
.g-cells .gbody { padding-left: 9px; }
.b-cell { width: 45px; }
.g-edit { width: 222px; }
.g-edit .gbody { padding-left: 15px; }
.editlist { width: 97px; margin-top: -1px; }
.edi { height: 27px; display: flex; align-items: center; gap: 4px; }
.edi .chev { width: 5px; height: 5px; margin-left: 2px; }
.sigma { font-size: 18px; width: 18px; text-align: center; font-family: "Liberation Serif", serif; }
.b-sort { width: 44px; margin-right: 8px; padding-top: 1px; }
.b-sort .bt { margin-top: 9px; line-height: 18px; }
.az { font: 15px "Open Sans", sans-serif; fill: #555; }
.az-a { fill: #4c8ed0; }
.g-ana { width: 70px; }
.g-ana .bt { margin-top: 1px; }

.formula { height: 35px; flex: none; display: flex; gap: 10px; padding: 2px 0 0 7px; background: #f9f9f9; }
.namebox { width: 136px; height: 25px; background: #fff; display: flex; align-items: center; justify-content: space-between; padding: 0 8px 0 4px; font-size: 12px; color: #666; }
.fxbox { width: 98px; height: 25px; background: #fff; display: flex; align-items: center; gap: 18px; padding-left: 10px; }
.fx { font: italic 15px "Liberation Serif", serif; color: #555; }
.fxinput { flex: 1; height: 25px; background: #fff; margin-left: -5px; }

/* Sheet */
.sheet { flex: 1; min-height: 0; position: relative; overflow: hidden; background: #f2f2f2; }
.grid { border-collapse: separate; border-spacing: 0; table-layout: fixed; width: 2097px; font-family: Lato, "Noto Sans", sans-serif; font-size: 26px; color: #1a1a1a; }
.c-rh { width: 43px; } .c-c { width: 173px; } .c-d { width: 197px; } .c-e { width: 40px; } .c-f { width: 149px; }
.c-g { width: 116px; } .c-h { width: 168px; } .c-i { width: 129px; } .c-j { width: 156px; } .c-k { width: 182px; }
.c-l { width: 144px; } .c-m { width: 139px; } .c-n { width: 143px; } .c-o { width: 100px; } .c-p { width: 205px; } .c-q { width: 13px; }
.grid th { background: #f4f4f4; border-right: 2px solid #e2e2e2; border-bottom: 2px solid #e2e2e2; font: 600 13px "Open Sans", sans-serif; color: #777; padding: 0; text-align: center; overflow: hidden; }
.grid td { background: #fff; border-right: 2px solid #e6e6e6; border-bottom: 2px solid #e6e6e6; padding: 0 0 1px 6px; white-space: nowrap; overflow: hidden; vertical-align: bottom; line-height: 34px; letter-spacing: 0.6px; -webkit-text-stroke: 0.35px #1a1a1a; position: relative; }
.hh { height: 24px; }
.hh th { font-weight: 400; font-size: 13px; }
.corner svg { display: block; margin-left: auto; }
.h32 { height: 32px; } .h35 { height: 35px; } .h38 { height: 38px; } .h39 { height: 39px; } .h40 { height: 40px; } .h41 { height: 41px; } .h42 { height: 42px; } .h43 { height: 43px; }
.h53 { height: 53px; } .h54 { height: 54px; } .h55 { height: 55px; } .h56 { height: 56px; } .h58 { height: 58px; } .h59 { height: 59px; } .h118 { height: 118px; }
.grid td.lite { -webkit-text-stroke: 0; }
.grid td.num, .grid td.figs { font-size: 25px; letter-spacing: 0; }
.grid td.num { text-align: right; padding-left: 0; padding-right: 5px; }
.grid td.r4 { padding-right: 4px; } .grid td.r5 { padding-right: 5px; } .grid td.r6 { padding-right: 6px; }
.grid td.r12 { padding-right: 12px; } .grid td.r13 { padding-right: 13px; }
.grid td.pad13 { padding-left: 13px; }
.grid td.pad20 { padding-left: 20px; }
.grid td.acct { padding-left: 13px; }
.acct span { display: inline-block; }
.acct span:first-child { width: 57px; }
.fy td { background: #fdfd33; border-color: #fdfd33; }
.fo td { background: #fdb928; border-color: #fdb928; padding-bottom: 2px; }
.fy td.white, .fo td.white { background: #fff; border-color: #e6e6e6; border-right-color: #fff; }
.fo td.fy-cell { background: #fdfd33; border-color: #fdfd33; }
.grid td.serif { font-family: "Liberation Serif", serif; font-size: 29px; letter-spacing: 0; }
.grid td.big { font-size: 30px; }
.col-on { background: #d2d2d2 !important; box-shadow: inset 0 -3px 0 #6f8f7d; }
.row-on { background: #d2d2d2 !important; }
.grid td.active { box-shadow: inset 0 0 0 1.5px #45705a; overflow: visible; text-align: left; padding: 0 0 9px 26px; line-height: 0; }
.cursor { display: inline-block; }
.handle { position: absolute; right: -2px; bottom: -2px; width: 5px; height: 5px; background: #2f6b4c; }
.total { box-shadow: inset 0 2px 0 #555, inset 0 -4px 0 #6a6a6a; }
.grid td.peer { overflow: visible; box-shadow: inset 0 0 0 1.5px #8f9a6a; }
.badge { position: absolute; right: -11px; top: -9px; width: 21px; height: 21px; border-radius: 50%; background: #2b7cd3; color: #fff; font: 600 10px/21px "Open Sans", sans-serif; text-align: center; letter-spacing: 0; -webkit-text-stroke: 0; z-index: 2; }
.sheet-tag { position: absolute; left: 1867px; bottom: 5px; }
```
